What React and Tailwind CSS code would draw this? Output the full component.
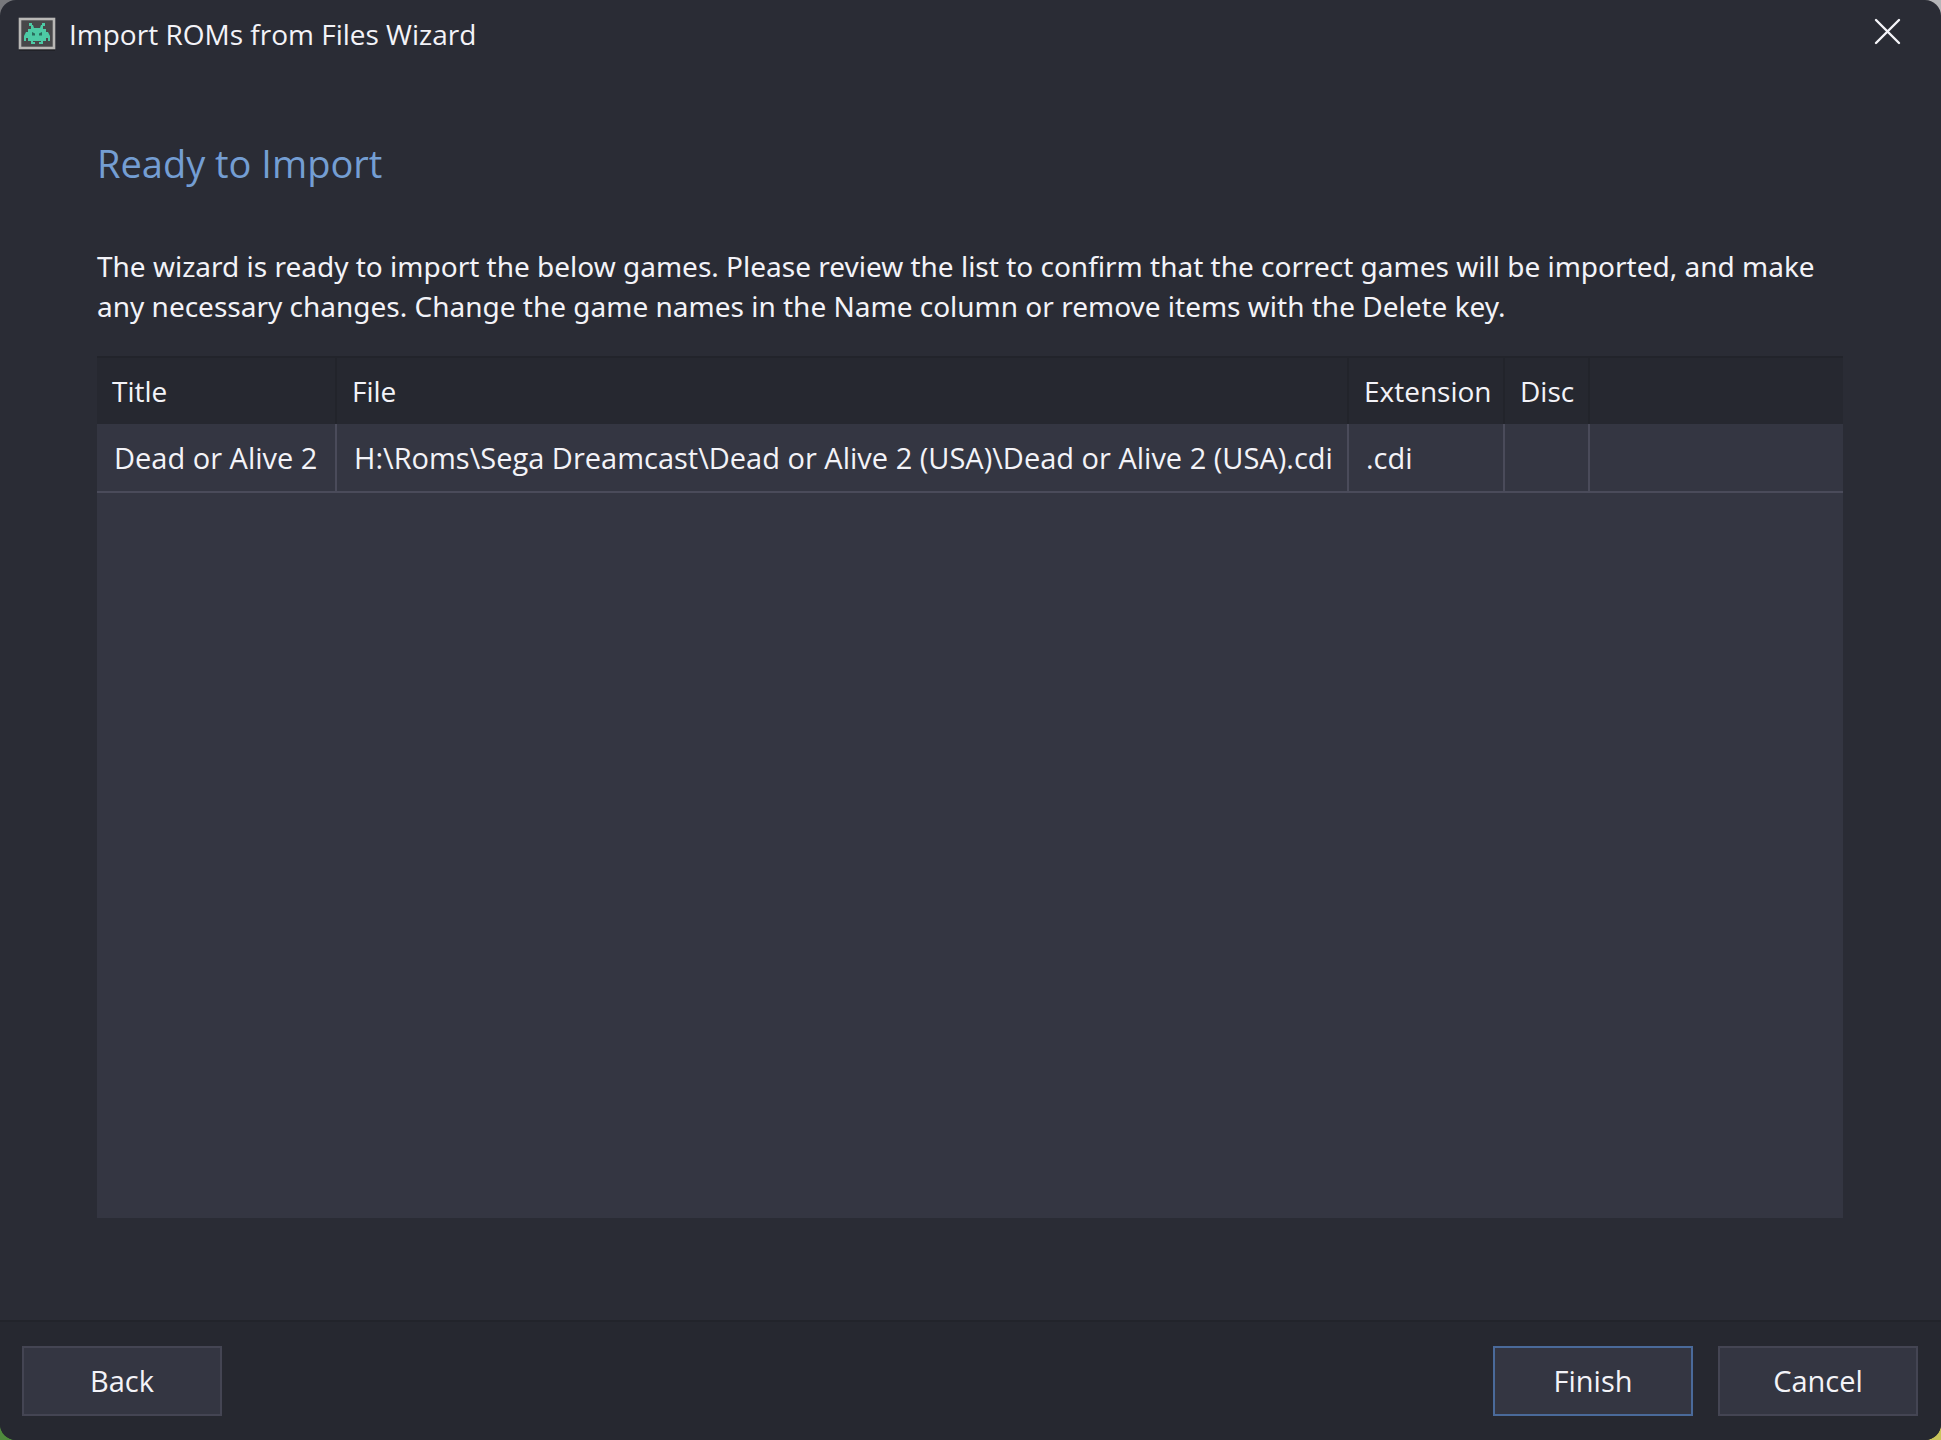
const columns = [
  { id: 'title', label: 'Title', width: 'w-60' },
  { id: 'file', label: 'File', width: 'w-[1012px]' },
  { id: 'extension', label: 'Extension', width: 'w-[156px]' },
  { id: 'disc', label: 'Disc', width: 'w-[85px]' },
];

const games = [
  {
    title: 'Dead or Alive 2',
    file: 'H:\\Roms\\Sega Dreamcast\\Dead or Alive 2 (USA)\\Dead or Alive 2 (USA).cdi',
    extension: '.cdi',
    disc: '',
  },
];

function InvaderIcon() {
  return (
    <svg width="40" height="36" viewBox="0 0 40 36" aria-hidden="true">
      <rect x="2" y="4" width="36" height="31" fill="#202127" />
      <rect x="3" y="3" width="34" height="29" fill="#48484a" stroke="#b9b8b6" strokeWidth="2.6" />
      <path
        d="M12 7h3v2h1l1 3h6l1-3h1V7h3v3h-2v3h3v3h2l2 4v5h-2v-3h-2v3h-3v3h-4v-2h2v-1h-8v1h2v2h-4v-3h-3v-3H9v3H7v-5l2-4h2v-3h3v-3h-2z"
        fill="#4dcaa5"
      />
      <path d="M15 16l3 1.5v2h-3zM25 16l-3 1.5v2h3z" fill="#2a6b5c" />
    </svg>
  );
}

function TitleBar() {
  return (
    <header className="flex h-16 items-start justify-between pl-[17px] pr-10">
      <div className="flex items-center gap-3 pt-[14px]">
        <InvaderIcon />
        <span className="text-[28px] leading-10">Import ROMs from Files Wizard</span>
      </div>
      <button type="button" aria-label="Close" className="mt-[18px]">
        <svg width="27" height="27" viewBox="0 0 27 27" fill="none" stroke="#f5f5fa" strokeWidth="2.4" strokeLinecap="round">
          <path d="M2 2 25 25M25 2 2 25" />
        </svg>
      </button>
    </header>
  );
}

function GamesTable() {
  return (
    <div className="flex-1 bg-[#343642]">
      <table className="w-full table-fixed border-separate border-spacing-0 text-left">
        <thead className="text-[28px]">
          <tr className="h-[68px] bg-[#262830]">
            {columns.map(col => (
              <th
                key={col.id}
                className={`${col.width} border-t-2 border-r-2 border-[#22242b] px-[15px] font-normal`}
              >
                {col.label}
              </th>
            ))}
            <td className="border-t-2 border-[#22242b]" />
          </tr>
        </thead>
        <tbody>
          {games.map(game => (
            <tr key={game.file} className="h-[69px]">
              {columns.map(col => (
                <td
                  key={col.id}
                  className="whitespace-nowrap border-b-2 border-r-2 border-[#4a4b5a] px-[17px]"
                >
                  {game[col.id]}
                </td>
              ))}
              <td className="border-b-2 border-[#4a4b5a]" />
            </tr>
          ))}
        </tbody>
      </table>
    </div>
  );
}

function WizardButton({ children, primary = false }) {
  return (
    <button
      type="button"
      className={`h-[70px] w-[200px] border-2 bg-[#343642] ${
        primary ? 'border-[#4a6a9a]' : 'border-[#444553]'
      }`}
    >
      {children}
    </button>
  );
}

export default function App() {
  return (
    // The desktop shows behind the rounded window corners
    <div className="flex min-h-screen bg-[conic-gradient(#b5b5b8_90deg,#c9c45a_90deg_180deg,#4f8a3c_180deg_270deg,#77787c_270deg)]">
      <div className="flex flex-1 flex-col overflow-hidden rounded-2xl bg-[#2a2c35] font-['Open_Sans',sans-serif] text-[29px] leading-10 text-[#f3f3f8]">
        <TitleBar />

        <main className="flex flex-1 flex-col pb-[102px] pl-[97px] pr-[98px] pt-[75px]">
          <h1 className="text-[38px] leading-12 text-[#749ed3]">Ready to Import</h1>
          <p className="mb-[30px] mt-[59px] font-['Noto_Sans',sans-serif] text-[28px] leading-10">
            The wizard is ready to import the below games. Please review the list to confirm that
            the correct games will be imported, and make any necessary changes. Change the game
            names in the Name column or remove items with the Delete key.
          </p>
          <GamesTable />
        </main>

        <footer className="flex items-center gap-[25px] border-t-2 border-[#22242b] bg-[#262830] py-6 pl-[22px] pr-[23px]">
          <div className="flex-1">
            <WizardButton>Back</WizardButton>
          </div>
          <WizardButton primary>Finish</WizardButton>
          <WizardButton>Cancel</WizardButton>
        </footer>
      </div>
    </div>
  );
}
